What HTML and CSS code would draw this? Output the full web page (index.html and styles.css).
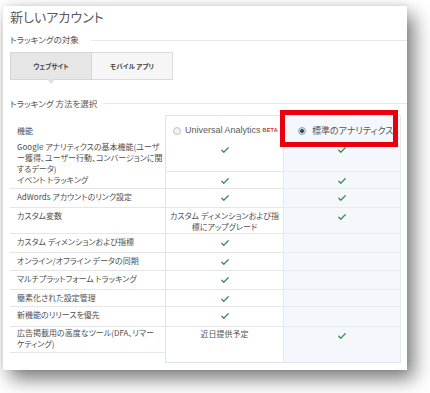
FILE: index.html
```html
<!DOCTYPE html>
<html lang="ja">
<head>
<meta charset="utf-8">
<link rel="stylesheet" href="styles.css">
</head>
<body>
<div class="page">
<div class="card">
  <h1 class="title">新しいアカウント</h1>
  <div class="section-head s1"><span>トラッキングの対象</span></div>
  <div class="tabs">
    <div class="tab active">ウェブサイト</div>
    <div class="tab">モバイル アプリ</div>
  </div>
  <div class="section-head s2"><span>トラッキング 方法を選択</span></div>
  <div class="table">
    <div class="c1 head">機能</div>
    <div class="c2 head top"><span class="radio"></span><span class="ua">Universal Analytics</span><span class="beta">BETA</span></div>
    <div class="c3 head top"><span class="radio on"></span><span class="std">標準のアナリティクス</span></div>

    <div class="c1 first">Google アナリティクスの基本機能(ユーザ<br>ー獲得、ユーザー行動、コンバージョンに関<br>するデータ)</div>
    <div class="c2 ok"><svg class="chk" viewBox="0 0 8 6"><polyline points="0.8,3.2 2.8,5.2 7.2,0.8"/></svg></div>
    <div class="c3 ok"><svg class="chk" viewBox="0 0 8 6"><polyline points="0.8,3.2 2.8,5.2 7.2,0.8"/></svg></div>

    <div class="c1">イベント トラッキング</div>
    <div class="c2 ok"><svg class="chk" viewBox="0 0 8 6"><polyline points="0.8,3.2 2.8,5.2 7.2,0.8"/></svg></div>
    <div class="c3 ok"><svg class="chk" viewBox="0 0 8 6"><polyline points="0.8,3.2 2.8,5.2 7.2,0.8"/></svg></div>

    <div class="c1">AdWords アカウントのリンク設定</div>
    <div class="c2 ok"><svg class="chk" viewBox="0 0 8 6"><polyline points="0.8,3.2 2.8,5.2 7.2,0.8"/></svg></div>
    <div class="c3 ok"><svg class="chk" viewBox="0 0 8 6"><polyline points="0.8,3.2 2.8,5.2 7.2,0.8"/></svg></div>

    <div class="c1">カスタム変数</div>
    <div class="c2 txt">カスタム ディメンションおよび指<br>標にアップグレード</div>
    <div class="c3 ok"><svg class="chk" viewBox="0 0 8 6"><polyline points="0.8,3.2 2.8,5.2 7.2,0.8"/></svg></div>

    <div class="c1">カスタム ディメンションおよび指標</div>
    <div class="c2 ok"><svg class="chk" viewBox="0 0 8 6"><polyline points="0.8,3.2 2.8,5.2 7.2,0.8"/></svg></div>
    <div class="c3"></div>

    <div class="c1">オンライン/オフライン データの同期</div>
    <div class="c2 ok"><svg class="chk" viewBox="0 0 8 6"><polyline points="0.8,3.2 2.8,5.2 7.2,0.8"/></svg></div>
    <div class="c3"></div>

    <div class="c1">マルチプラットフォーム トラッキング</div>
    <div class="c2 ok"><svg class="chk" viewBox="0 0 8 6"><polyline points="0.8,3.2 2.8,5.2 7.2,0.8"/></svg></div>
    <div class="c3"></div>

    <div class="c1">簡素化された設定管理</div>
    <div class="c2 ok"><svg class="chk" viewBox="0 0 8 6"><polyline points="0.8,3.2 2.8,5.2 7.2,0.8"/></svg></div>
    <div class="c3"></div>

    <div class="c1">新機能のリリースを優先</div>
    <div class="c2 ok"><svg class="chk" viewBox="0 0 8 6"><polyline points="0.8,3.2 2.8,5.2 7.2,0.8"/></svg></div>
    <div class="c3"></div>

    <div class="c1 last">広告掲載用の高度なツール(DFA、リマー<br>ケティング)</div>
    <div class="c2 txt bottom">近日提供予定</div>
    <div class="c3 ok bottom"><svg class="chk" viewBox="0 0 8 6"><polyline points="0.8,3.2 2.8,5.2 7.2,0.8"/></svg></div>

    <div class="redbox"></div>
  </div>
</div>
</div>
</body>
</html>
```

FILE: styles.css
```css
html, body {
  margin: 0;
  background: #fff;
}
body {
  font-family: "Noto Sans CJK JP", sans-serif;
  font-feature-settings: "palt";
  color: #444;
}
.page {
  width: 430px;
  height: 393px;
  padding-top: 6px;
  box-sizing: border-box;
  overflow: hidden;
}
.card {
  margin-left: 3px;
  width: 404px;
  height: 364px;
  box-sizing: border-box;
  padding: 4px 6px 0 7px;
  background: #fff;
  box-shadow:
    0 -1px 6px rgba(0, 0, 0, 0.08),
    7px 9px 18px rgba(0, 0, 0, 0.52);
}
.title {
  margin: 0;
  font-size: 13px;
  line-height: 14px;
  font-weight: 400;
  color: #5a5a5a;
}
.section-head {
  display: flex;
  align-items: center;
  margin-right: -6px;
  font-size: 8.5px;
  line-height: 11px;
  color: #555;
}
.section-head::after {
  content: "";
  flex: 1;
  border-top: 1px solid #e8e8e8;
}
.s1 { margin-top: 10px; }
.s1::after { margin: 2px 0 0 12px; }
.s2 { margin-top: 18px; }
.s2::after { margin-left: 6px; }

.tabs {
  display: flex;
  width: 163px;
  height: 28px;
  margin-top: 7px;
}
.tab {
  flex: 1;
  display: flex;
  align-items: center;
  justify-content: center;
  font-size: 6.5px;
  font-weight: 700;
  color: #444;
  background: #f6f6f6;
  border: 1px solid #dcdcdc;
}
.tab + .tab { border-left: none; }
.tab.active {
  position: relative;
  background: #e6e6e6;
  border-color: #d6d6d6;
}
.tab.active::after {
  content: "";
  position: absolute;
  left: 50%;
  top: 100%;
  margin-left: -4px;
  border-left: 4px solid transparent;
  border-right: 4px solid transparent;
  border-top: 5px solid #e0e0e0;
}

.table {
  position: relative;
  margin-top: 6px;
  display: grid;
  grid-template-columns: 155px 118px 118px;
  grid-template-rows: 26px 31px 17px 19px 26px 19px 18px 19px 17px 20px 36px;
  font-size: 8px;
  line-height: 11px;
  color: #505050;
}
.c1, .c2, .c3 {
  box-sizing: border-box;
}
.c1 {
  padding: 2px 0 0 7px;
  border-bottom: 1px solid #e6e6e6;
  white-space: nowrap;
}
.c1.head, .c1.first { border-bottom: none; }
.c1.first { padding-top: 0; }
.c1.last {
  height: 26px;
  align-self: start;
  padding-top: 0;
}
.c2 {
  border-left: 1px solid #e3e3e3;
  border-bottom: 1px solid #e6e6e6;
}
.c3 {
  background: #f4f7fb;
  border-left: 1px solid #e2e8ef;
  border-right: 1px solid #e2e8ef;
  border-bottom: 1px solid #e6ebf1;
}
.top { border-top: 1px solid #e3e3e3; }
.c3.top { border-top-color: #e2e8ef; }
.bottom { border-bottom: 1px solid #dde3ea; }

.head {
  display: flex;
  align-items: center;
  align-self: start;
  height: 26px;
  padding-top: 4px;
}
.c1.head { padding: 4px 0 0 7px; }
.c2.head { padding-left: 7px; border-bottom: none; }
.c3.head { padding-left: 14px; border-bottom: none; }

.radio {
  width: 6px;
  height: 6px;
  border-radius: 50%;
  border: 1px solid #c4c4c4;
  background: #f2f2f2;
  flex: none;
}
.radio.on {
  border-color: #9aa3ad;
  background: radial-gradient(circle, #2f4a66 0 1.6px, #d7dde4 2.2px);
}
.ua {
  margin-left: 4px;
  font-family: "Liberation Sans", "Noto Sans CJK JP", sans-serif;
  font-size: 9px;
  color: #5a5a5a;
}
.beta {
  margin-left: 2px;
  font-family: "Liberation Sans", sans-serif;
  font-size: 5.5px;
  font-weight: 700;
  color: #d0382b;
  letter-spacing: 0.2px;
}
.std {
  margin-left: 6px;
  font-size: 9px;
  color: #555;
}

.ok {
  display: flex;
  justify-content: center;
  align-items: flex-start;
  padding-top: 6px;
}
.chk {
  width: 8px;
  height: 6px;
}
.chk polyline {
  fill: none;
  stroke: #3f8d52;
  stroke-width: 1.3;
  stroke-linecap: round;
  stroke-linejoin: round;
}
.txt {
  text-align: center;
  padding-top: 2px;
  white-space: nowrap;
}
.c2.bottom { padding-top: 1px; }

.redbox {
  position: absolute;
  left: 270px;
  top: -5px;
  width: 118px;
  height: 37px;
  box-sizing: border-box;
  border: 5px solid #e8000f;
}
```
